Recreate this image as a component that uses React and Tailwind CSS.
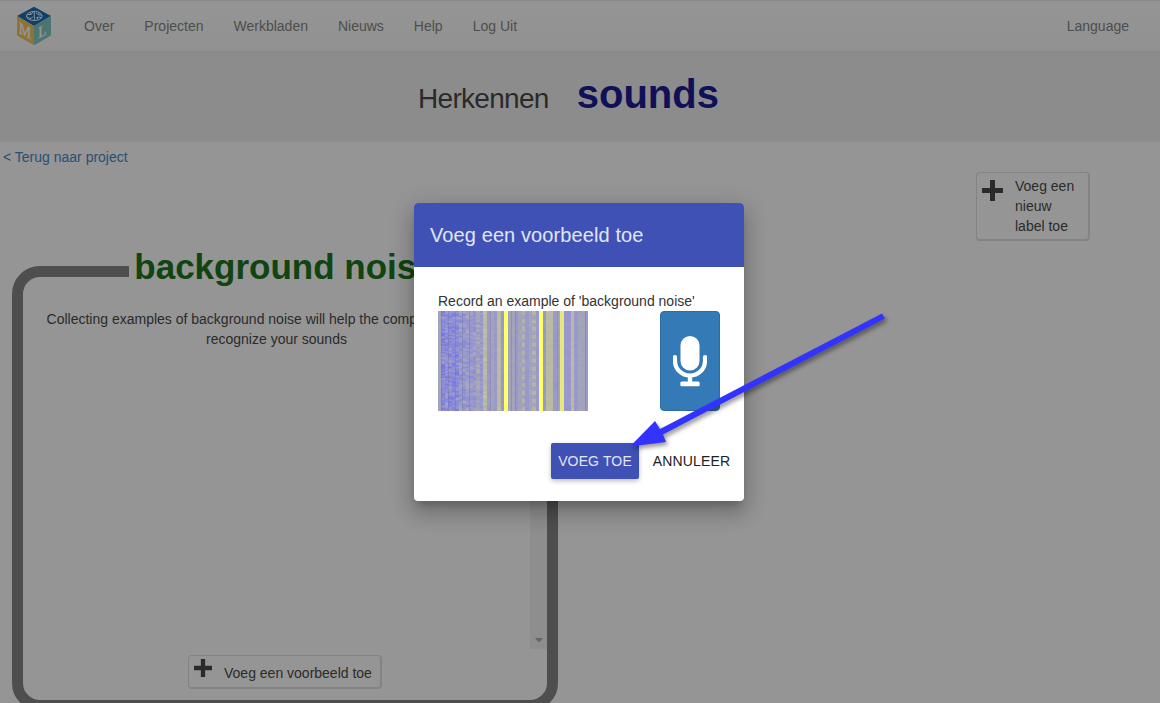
import React from 'react';

const NAV = ['Over', 'Projecten', 'Werkbladen', 'Nieuws', 'Help', 'Log Uit'];

// Base colour and noise level of each spectrogram column.
const BLUE = [153, 153, 204];
const GREY = [163, 163, 187];
const KHAKI = [186, 186, 164];
const YELLOW = [255, 255, 104];
const KHAKI_COLS = [13, 17, 31, 32, 38];
const GREY_COLS = [0, 11, 15, 20, 21, 23, 24, 26, 27, 34, 40, 41];
const YELLOW_COLS = [19, 29, 35];

function noise(i, j) {
  const v = Math.sin(i * 127.1 + j * 311.7) * 43758.5453;
  return v - Math.floor(v);
}

function Spectrogram() {
  const cells = [];
  const cw = 150 / 43;
  for (let i = 0; i < 43; i++) {
    let base = BLUE;
    if (KHAKI_COLS.includes(i)) base = KHAKI;
    if (GREY_COLS.includes(i)) base = GREY;
    if (YELLOW_COLS.includes(i)) base = i === 35 ? [232, 232, 124] : YELLOW;
    const amp = YELLOW_COLS.includes(i) ? 0 : i < 14 && i > 0 ? 58 - i * 2.6 : 8;
    const shift = i > 0 && i < 6 ? 13 : 0;
    for (let j = 0; j < 100; j++) {
      const smooth = (noise(i, j) + noise(i, j + 1)) / 2 - 0.5;
      const n = smooth * amp - shift;
      const stripe = (i === 24 || i === 27) && j % 8 < 4 ? 16 : 0;
      const r = Math.round(base[0] + n + stripe);
      const b = Math.round(base[2] - n * 0.8 - stripe);
      cells.push(
        <rect key={i + '-' + j} x={i * cw} y={j} width={cw + 0.1} height={1.05} fill={`rgb(${r},${r},${b})`} />
      );
    }
  }
  return (
    <svg width="150" height="100" viewBox="0 0 150 100" className="block" shapeRendering="crispEdges">
      {cells}
      {[1, 3, 5, 7, 9, 15, 21, 22, 34, 42].map((i) => (
        <rect key={i} x={i * cw} y="0" width="1" height="100" fill="#6c6c9c" opacity="0.35" />
      ))}
    </svg>
  );
}

function Logo() {
  return (
    <svg width="36" height="40" viewBox="0 0 36 40" className="block">
      <path d="M18 .8 35 10 18 20 1 10z" fill="#005aa8" />
      <path d="M1 10 18 20V39.300L1 29.500z" fill="#f0bf4a" />
      <path d="M35 10 18 20V39.300L35 29.500z" fill="#74c0b8" />
      <g fill="none" stroke="#e8f2fa" strokeWidth="1">
        <ellipse cx="18.300" cy="10" rx="7.800" ry="4.600" />
        <path d="M11 8.500h4l2-2.500M18.300 5.500v9M20 7l3 2h3M11 11.500l4 1 2-2M20 12l3-1 3 1M14 6.500l1 2M22 13.500l-1-2M14 13.500l1-1.500M23 6.500l0 2" />
      </g>
      <text transform="matrix(.82 .42 0 1 3 27)" fontSize="16.500" fontFamily="Liberation Serif, serif" fill="#fff" stroke="#fff" strokeWidth=".4">M</text>
      <text transform="matrix(.82 -.42 0 1 22.300 32.600)" fontSize="16" fontFamily="Liberation Serif, serif" fill="#fff" stroke="#fff" strokeWidth=".4">L</text>
    </svg>
  );
}

function Plus({ size }) {
  return (
    <svg width={size} height={size} viewBox="0 0 21 21" className="block shrink-0">
      <path d="M8 0h5v8h8v5h-8v8H8v-8H0V8h8z" fill="#333" />
    </svg>
  );
}

function Dialog() {
  return (
    <div className="flex h-[298px] w-[330px] flex-col overflow-hidden rounded-[4px] bg-white shadow-[0_7px_8px_-4px_rgba(0,0,0,.2),0_13px_19px_2px_rgba(0,0,0,.14),0_5px_24px_4px_rgba(0,0,0,.12)]">
      <div className="flex h-16 shrink-0 items-center bg-[#3f51b5] px-4 text-[20px] tracking-[0.1px] text-white/85">
        Voeg een voorbeeld toe
      </div>
      <div className="flex flex-col px-6 pt-6 text-[14px] leading-5 text-[#333]">
        <div>Record an example of 'background noise'</div>
        <div className="flex justify-between">
          <Spectrogram />
          <button className="flex h-[100px] w-[60px] items-center justify-center rounded-[4px] border border-[#2e6da4] bg-[#337ab7] pt-px">
            <svg width="34" height="51" viewBox="0 0 34 51">
              <rect x="7.500" y="0" width="19" height="34.500" rx="9.500" fill="#fff" />
              <path d="M2 21v4a15 14.500 0 0 0 30 0V21" fill="none" stroke="#fff" strokeWidth="4.200" strokeLinecap="round" />
              <path d="M14.800 40h4.400v5.500h6a1.500 1.500 0 0 1 1.500 1.500v1.800a1.500 1.500 0 0 1-1.500 1.500H8.800a1.500 1.500 0 0 1-1.500-1.500V47a1.500 1.500 0 0 1 1.500-1.500h6z" fill="#fff" />
            </svg>
          </button>
        </div>
      </div>
      <div className="mt-8 flex justify-end gap-2 pr-2 text-[14px] leading-9 tracking-[0.14px]">
        <button className="h-9 w-[88px] rounded-[2px] bg-[#3f51b5] text-white/85 shadow-[0_2px_5px_0_rgba(0,0,0,.26)]">VOEG TOE</button>
        <button className="h-9 w-[89px] text-[#212121]">ANNULEER</button>
      </div>
    </div>
  );
}

export default function App() {
  return (
    <div className="relative h-[703px] w-[1160px] overflow-hidden bg-white font-['Liberation_Sans',Arial,sans-serif] text-[14px] leading-5 text-[#333]">
      <nav className="flex h-[52px] items-center border-y border-[#e7e7e7] bg-linear-to-b from-white to-[#f8f8f8] pr-[31px] pl-4 text-[#777]">
        <Logo />
        <div className="ml-8 flex gap-[30px]">
          {NAV.map((n) => (
            <a key={n}>{n}</a>
          ))}
        </div>
        <a className="ml-auto">Language</a>
      </nav>

      <header className="flex h-[90px] items-baseline justify-center gap-7 bg-[#eee] pt-[18px] pr-[23px]">
        <span className="text-[28px] tracking-[-0.7px]">Herkennen</span>
        <span className="text-[40px] leading-[48px] font-bold text-[#00008b]">sounds</span>
      </header>

      <div className="flex justify-between pt-[5px] pr-[70px] pl-[3px]">
        <a className="text-[#337ab7]">&lt; Terug naar project</a>
        <button className="mt-[25px] flex h-[69px] w-[114px] items-start gap-3 rounded-[4px] border border-r-2 border-b-2 border-[#ddd] pt-[3px] pl-[5px] text-left">
          <span className="pt-1"><Plus size={21} /></span>
          <span className="w-[62px]">Voeg een nieuw label toe</span>
        </button>
      </div>

      <fieldset className="mt-[5px] ml-3 flex h-[465px] w-[546px] flex-col rounded-[28px] border-[11px] border-[#777]">
        <legend className="mx-auto px-[5px] text-[35px] leading-[50px] font-bold text-[#006400]">
          <span className="relative -top-1">background noise</span>
        </legend>
        <div className="flex h-[393px] flex-col">
          <p className="mx-auto mt-[13px] w-[500px] pr-[17px] text-center">
            Collecting examples of background noise will help the computer be able to recognize your sounds
          </p>
          <div className="mt-2 flex grow justify-end">
            <div className="flex h-full w-[17px] items-end justify-center bg-[#f1f1f1] pb-[6px]">
              <svg width="8" height="5" viewBox="0 0 8 5"><path d="M0 0h8L4 4.500z" fill="#a3a3a3" /></svg>
            </div>
          </div>
          <button className="mt-[6px] ml-[165px] flex h-[34px] w-[194px] shrink-0 items-start gap-3 rounded-[4px] border border-r-2 border-b-2 border-[#ddd] pt-[3px] pl-[5px]">
            <Plus size={18} />
            <span className="pt-1">Voeg een voorbeeld toe</span>
          </button>
        </div>
      </fieldset>

      <div className="absolute inset-0 flex items-center justify-center bg-[rgba(33,33,33,0.48)] pr-[2px] pb-0">
        <Dialog />
      </div>

      <svg className="absolute inset-0 drop-shadow-[2px_3px_2px_rgba(0,0,0,0.4)]" width="1160" height="703" viewBox="0 0 1160 703">
        <path d="M630 446.500 655 421 660 429 882 313.500 885 318.500 663 434.500 666 442z" fill="#3333ff" />
      </svg>
    </div>
  );
}
